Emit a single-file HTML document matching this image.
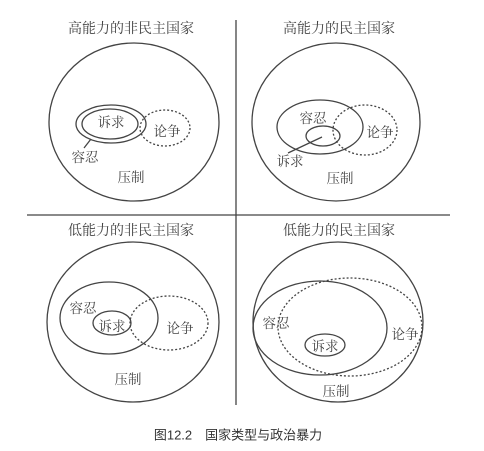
<!DOCTYPE html>
<html><head><meta charset="utf-8"><style>
html,body{margin:0;padding:0;background:#fff;width:484px;height:451px;overflow:hidden}
svg text{font-family:"Noto Serif CJK SC","Noto Serif CJK","Liberation Serif",serif;fill:#444;text-anchor:middle;dominant-baseline:central}
</style></head><body>
<svg width="484" height="451" viewBox="0 0 484 451" xmlns="http://www.w3.org/2000/svg">
<g stroke="#444" fill="none" stroke-width="1.3">
<line x1="236" y1="20" x2="236" y2="405"/>
<line x1="27" y1="215" x2="450" y2="215"/>
<ellipse cx="134" cy="122" rx="85" ry="79"/>
<ellipse cx="111" cy="124" rx="35" ry="19"/>
<ellipse cx="110" cy="124" rx="28" ry="15"/>
<ellipse cx="165" cy="128" rx="25" ry="18" stroke-dasharray="2,2"/>
<line x1="91" y1="139" x2="84" y2="148"/>
<ellipse cx="336" cy="122" rx="84" ry="79"/>
<ellipse cx="320" cy="127" rx="43" ry="27"/>
<ellipse cx="323" cy="136" rx="17" ry="10"/>
<ellipse cx="365" cy="130" rx="32" ry="25" stroke-dasharray="2,2"/>
<line x1="322" y1="137" x2="288" y2="153"/>
<ellipse cx="133" cy="322" rx="86" ry="80"/>
<ellipse cx="109" cy="318" rx="49" ry="36"/>
<ellipse cx="112" cy="323" rx="19" ry="12"/>
<ellipse cx="169" cy="323" rx="39" ry="27" stroke-dasharray="2,2"/>
<ellipse cx="338" cy="322" rx="85" ry="80"/>
<ellipse cx="320" cy="328" rx="67" ry="47"/>
<ellipse cx="350" cy="327" rx="72" ry="49" stroke-dasharray="2,2"/>
<ellipse cx="325" cy="345" rx="20" ry="11"/>
</g>
<g font-size="14">
<text x="131" y="28">高能力的非民主国家</text>
<text x="339" y="28">高能力的民主国家</text>
<text x="131" y="230">低能力的非民主国家</text>
<text x="339" y="230">低能力的民主国家</text>
</g>
<g font-size="13.5">
<text x="111" y="121">诉求</text>
<text x="167" y="130">论争</text>
<text x="85" y="156">容忍</text>
<text x="131" y="176">压制</text>
<text x="313" y="117">容忍</text>
<text x="380" y="131">论争</text>
<text x="290" y="160">诉求</text>
<text x="340" y="177">压制</text>
<text x="83" y="307">容忍</text>
<text x="112" y="325">诉求</text>
<text x="180" y="327">论争</text>
<text x="128" y="378">压制</text>
<text x="276" y="322">容忍</text>
<text x="325" y="345">诉求</text>
<text x="405" y="333">论争</text>
<text x="336" y="390">压制</text>
</g>
<text x="238" y="435" font-size="13" style="font-family:'Liberation Sans','Noto Sans CJK SC',sans-serif;fill:#333">图12.2　国家类型与政治暴力</text>
</svg>
</body></html>
